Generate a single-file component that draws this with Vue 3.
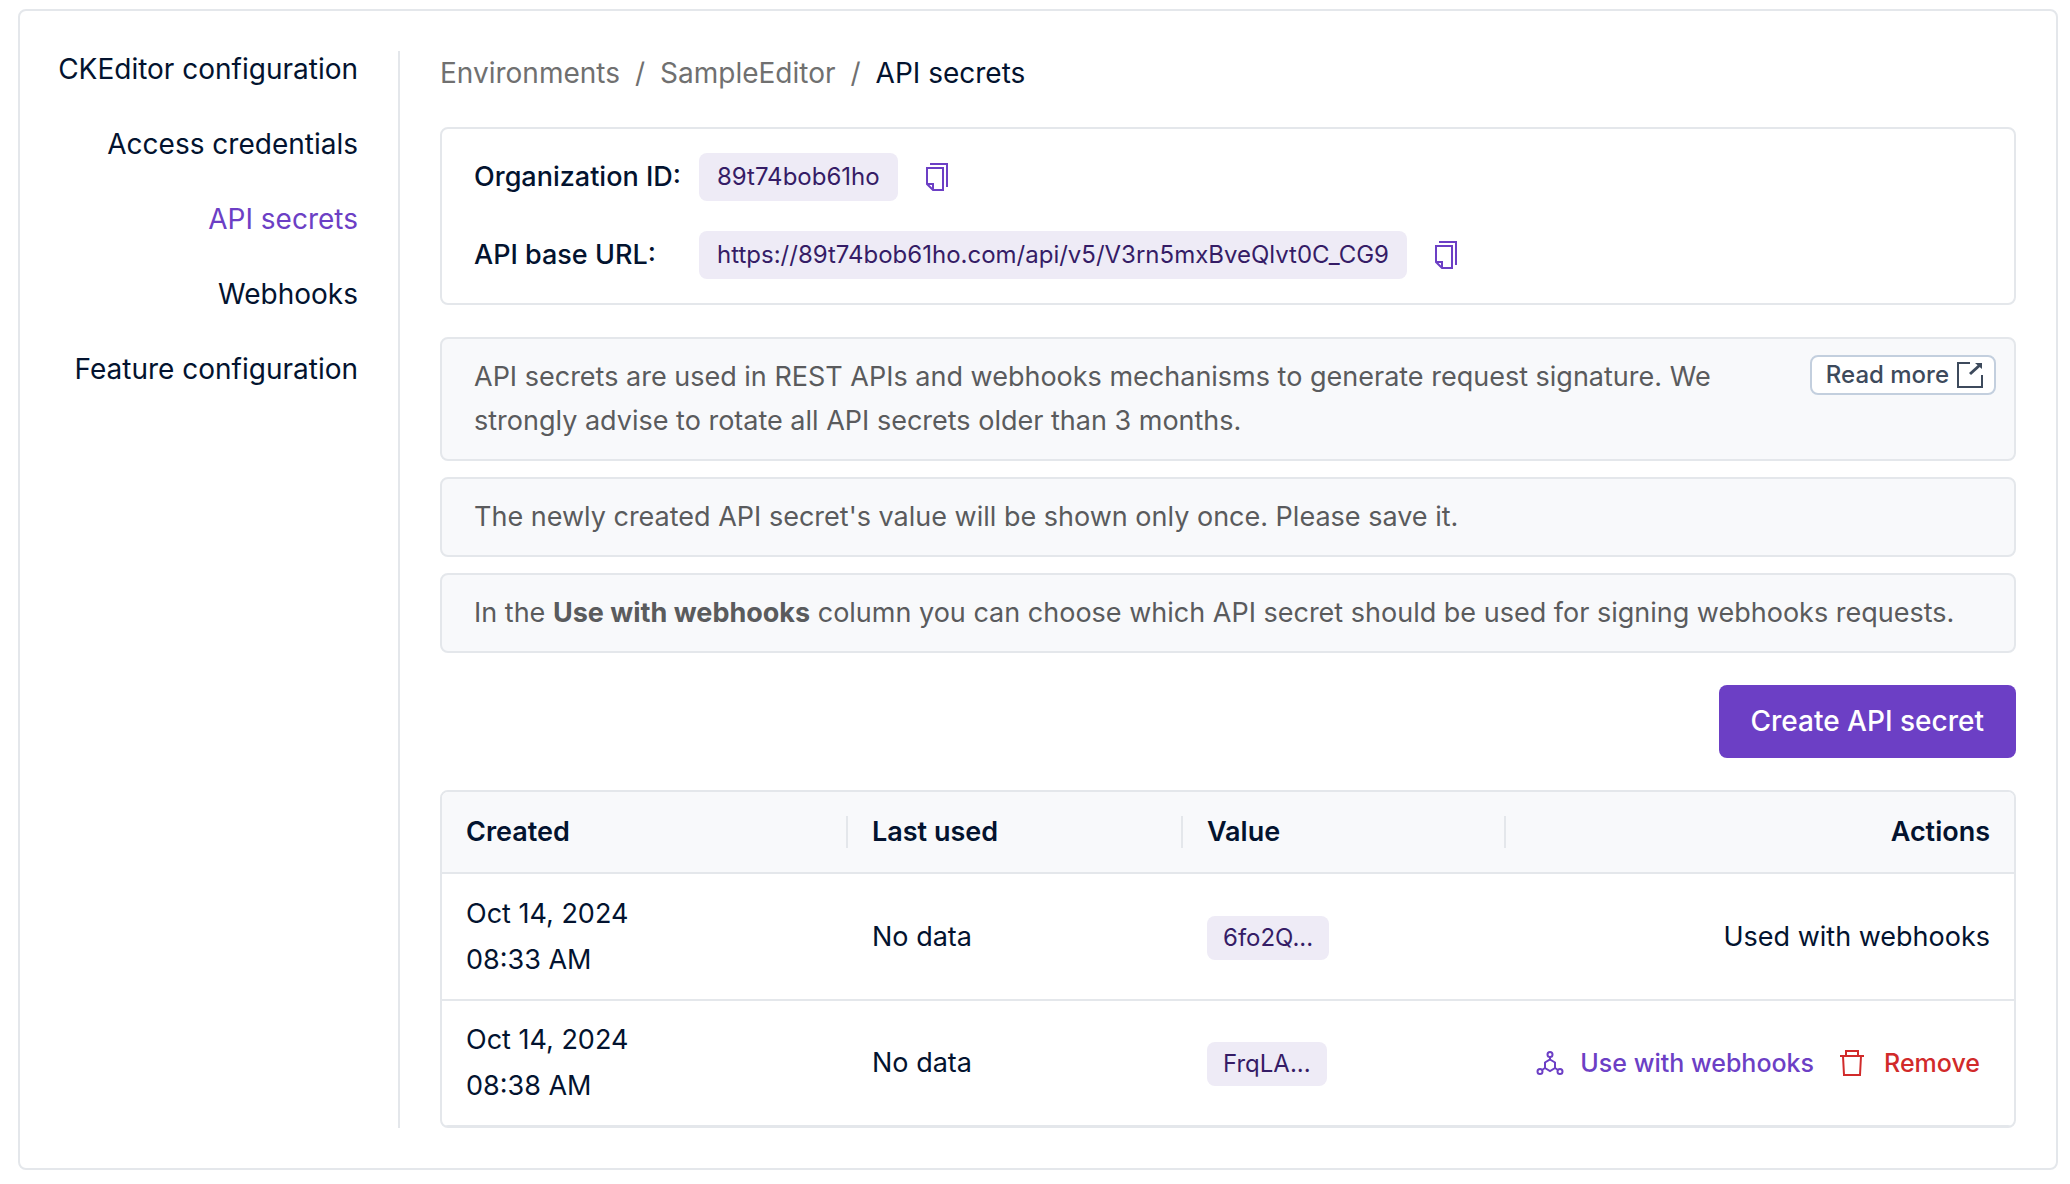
<script setup>
const navItems = [
  { label: 'CKEditor configuration' },
  { label: 'Access credentials' },
  { label: 'API secrets', active: true },
  { label: 'Webhooks' },
  { label: 'Feature configuration' },
]

const details = [
  { label: 'Organization ID:', value: '89t74bob61ho' },
  { label: 'API base URL:', value: 'https://89t74bob61ho.com/api/v5/V3rn5mxBveQlvt0C_CG9' },
]

const secrets = [
  { date: 'Oct 14, 2024', time: '08:33 AM', lastUsed: 'No data', value: '6fo2Q...', inUse: true },
  { date: 'Oct 14, 2024', time: '08:38 AM', lastUsed: 'No data', value: 'FrqLA...', inUse: false },
]
</script>

<template>
  <div class="panel">
    <nav class="sidebar" aria-label="Environment">
      <a
        v-for="item in navItems"
        :key="item.label"
        href="#"
        class="nav-link"
        :class="{ active: item.active }"
      >{{ item.label }}</a>
    </nav>

    <main class="content">
      <nav class="breadcrumbs" aria-label="Breadcrumb">
        <a href="#">Environments</a>
        <span>/</span>
        <a href="#">SampleEditor</a>
        <span>/</span>
        <span class="current">API secrets</span>
      </nav>

      <dl class="details">
        <div v-for="d in details" :key="d.label" class="detail">
          <dt>{{ d.label }}</dt>
          <dd>
            <span class="chip chip-large">{{ d.value }}</span>
            <button type="button" class="copy" aria-label="Copy">
              <svg width="22" height="28" viewBox="0 0 22 28" fill="none" stroke="currentColor" stroke-width="2">
                <path d="M4 1H21V24" />
                <path d="M1 5H17V27H7L1 21Z" />
                <path d="M1 21H7V27" />
              </svg>
            </button>
          </dd>
        </div>
      </dl>

      <section class="notices">
        <div class="notice">
          <p>
            API secrets are used in REST APIs and webhooks mechanisms to generate request signature. We
            strongly advise to rotate all API secrets older than 3 months.
          </p>
          <a href="#" class="read-more">
            Read more
            <svg width="26" height="26" viewBox="0 0 26 26" fill="none" stroke="currentColor" stroke-width="2">
              <path d="M13 1H1V25H25V13" />
              <path d="M13 12L23 3" stroke-width="3" />
              <path d="M18 1H25V7Z" fill="currentColor" stroke="none" />
            </svg>
          </a>
        </div>
        <div class="notice">
          <p>The newly created API secret's value will be shown only once. Please save it.</p>
        </div>
        <div class="notice">
          <p>
            In the <strong>Use with webhooks</strong> column you can choose which API secret should be
            used for signing webhooks requests.
          </p>
        </div>
      </section>

      <button type="button" class="create">Create API secret</button>

      <div class="table-wrap">
        <table>
          <colgroup>
            <col class="col-created" />
            <col class="col-used" />
            <col class="col-value" />
            <col />
          </colgroup>
          <thead>
            <tr>
              <th scope="col"><span>Created</span></th>
              <th scope="col"><span>Last used</span></th>
              <th scope="col"><span>Value</span></th>
              <th scope="col"><span>Actions</span></th>
            </tr>
          </thead>
          <tbody>
            <tr v-for="s in secrets" :key="s.value">
              <td>{{ s.date }}<br />{{ s.time }}</td>
              <td>{{ s.lastUsed }}</td>
              <td><span class="chip">{{ s.value }}</span></td>
              <td class="actions">
                <template v-if="s.inUse">Used with webhooks</template>
                <div v-else class="action-list">
                  <button type="button" class="action">
                    <svg width="28" height="24" viewBox="0 0 28 24" fill="none" stroke="currentColor" stroke-width="2">
                      <circle cx="14" cy="3.5" r="2.5" />
                      <circle cx="4" cy="20.5" r="2.5" />
                      <circle cx="24" cy="20.5" r="2.5" />
                      <path d="M14 8.5L19 11.5V17L14 20L9 17V11.5Z" />
                      <path d="M14 6V9M9 17L6 19M19 17L22 19" />
                    </svg>
                    Use with webhooks
                  </button>
                  <button type="button" class="action danger">
                    <svg width="24" height="26" viewBox="0 0 24 26" fill="none" stroke="currentColor" stroke-width="2">
                      <path d="M0 6H24M6 6V1H18V6" />
                      <path d="M3 6L4 25H20L21 6" />
                    </svg>
                    Remove
                  </button>
                </div>
              </td>
            </tr>
          </tbody>
        </table>
      </div>
    </main>
  </div>
</template>

<style>
body {
  background: #fff;
}
</style>

<style scoped>
.panel {
  display: flex;
  margin: 9px 12px 14px 18px;
  padding: 40px 40px 40px 0;
  border: 2px solid #e4e7eb;
  border-radius: 8px;
  color: #03132f;
  font-family: Inter, "Liberation Sans", sans-serif;
  font-size: 27px;
  line-height: 44px;
}

a {
  color: inherit;
  text-decoration: none;
}

button {
  padding: 0;
  border: 0;
  background: none;
  color: inherit;
  font: inherit;
  cursor: pointer;
}

svg {
  display: block;
  flex: none;
}

.sidebar {
  display: flex;
  flex: none;
  flex-direction: column;
  align-items: flex-end;
  gap: 39px;
  box-sizing: border-box;
  width: 380px;
  padding: 0 40px 0 0;
  border-right: 2px solid #e4e7eb;
  font-size: 28px;
  line-height: 36px;
  white-space: nowrap;
}

.nav-link.active {
  color: #6c3fc5;
}

.content {
  display: flex;
  flex: 1;
  flex-direction: column;
  min-width: 0;
  margin-left: 40px;
}

.breadcrumbs {
  display: flex;
  gap: 15px;
  margin-bottom: 32px;
  color: #707070;
  font-size: 28px;
}

.breadcrumbs .current {
  color: #03132f;
}

.details {
  display: flex;
  flex-direction: column;
  gap: 30px;
  margin: 0 0 32px;
  padding: 24px 32px;
  border: 2px solid #e4e7eb;
  border-radius: 8px;
}

.detail {
  display: flex;
  align-items: center;
}

.detail dt {
  width: 225px;
  font-weight: 500;
}

.detail dd {
  display: flex;
  align-items: center;
  gap: 28px;
  margin: 0;
}

.chip {
  display: inline-block;
  padding: 0 16px;
  border-radius: 8px;
  background: #eeebf6;
  color: #351c66;
  font-size: 24px;
  line-height: 44px;
  vertical-align: middle;
}

.chip-large {
  padding: 0 18px;
  line-height: 48px;
}

.copy {
  color: #6c3fc5;
}

.notices {
  display: flex;
  flex-direction: column;
  gap: 16px;
}

.notice {
  display: flex;
  align-items: flex-start;
  justify-content: space-between;
  gap: 48px;
  padding: 16px 18px 16px 32px;
  border: 2px solid #e4e7eb;
  border-radius: 8px;
  background: #f8f9fb;
  color: #5a5b5d;
}

.notice p {
  margin: 0;
}

.read-more {
  display: flex;
  flex: none;
  align-items: center;
  gap: 8px;
  padding: 0 11px 0 14px;
  border: 2px solid #c3cfde;
  border-radius: 8px;
  background: #fff;
  color: #3d4a5c;
  font-size: 24px;
  font-weight: 500;
  line-height: 36px;
}

.create {
  align-self: flex-end;
  margin: 32px 0;
  padding: 0 32px;
  border-radius: 8px;
  background: #6c3fc5;
  color: #fff;
  font-size: 28px;
  font-weight: 500;
  line-height: 73px;
}

.table-wrap {
  border: 2px solid #e4e7eb;
  border-radius: 8px;
  overflow: hidden;
}

table {
  width: 100%;
  border-collapse: separate;
  border-spacing: 0;
  table-layout: fixed;
}

.col-created {
  width: 406px;
}

.col-used {
  width: 335px;
}

.col-value {
  width: 323px;
}

th {
  padding: 24px 0;
  border-bottom: 2px solid #e4e7eb;
  background: #f8f9fb;
  font-weight: 600;
  text-align: left;
}

th span {
  display: block;
  padding: 0 24px;
  border-right: 2px solid #e4e7eb;
  line-height: 32px;
}

th:last-child span {
  border-right: 0;
  text-align: right;
}

td {
  padding: 17px 24px 16px;
  border-bottom: 2px solid #e4e7eb;
  line-height: 46px;
}

tr:last-child td {
  padding-top: 16px;
  border-bottom-width: 1px;
}

.actions {
  text-align: right;
}

.action-list {
  display: flex;
  justify-content: flex-end;
  gap: 26px;
  padding-right: 10px;
}

.action {
  display: flex;
  align-items: center;
  gap: 16px;
  color: #6c3fc5;
  font-size: 25px;
  font-weight: 500;
  white-space: nowrap;
}

.action.danger {
  gap: 20px;
  color: #d12a2a;
}
</style>
